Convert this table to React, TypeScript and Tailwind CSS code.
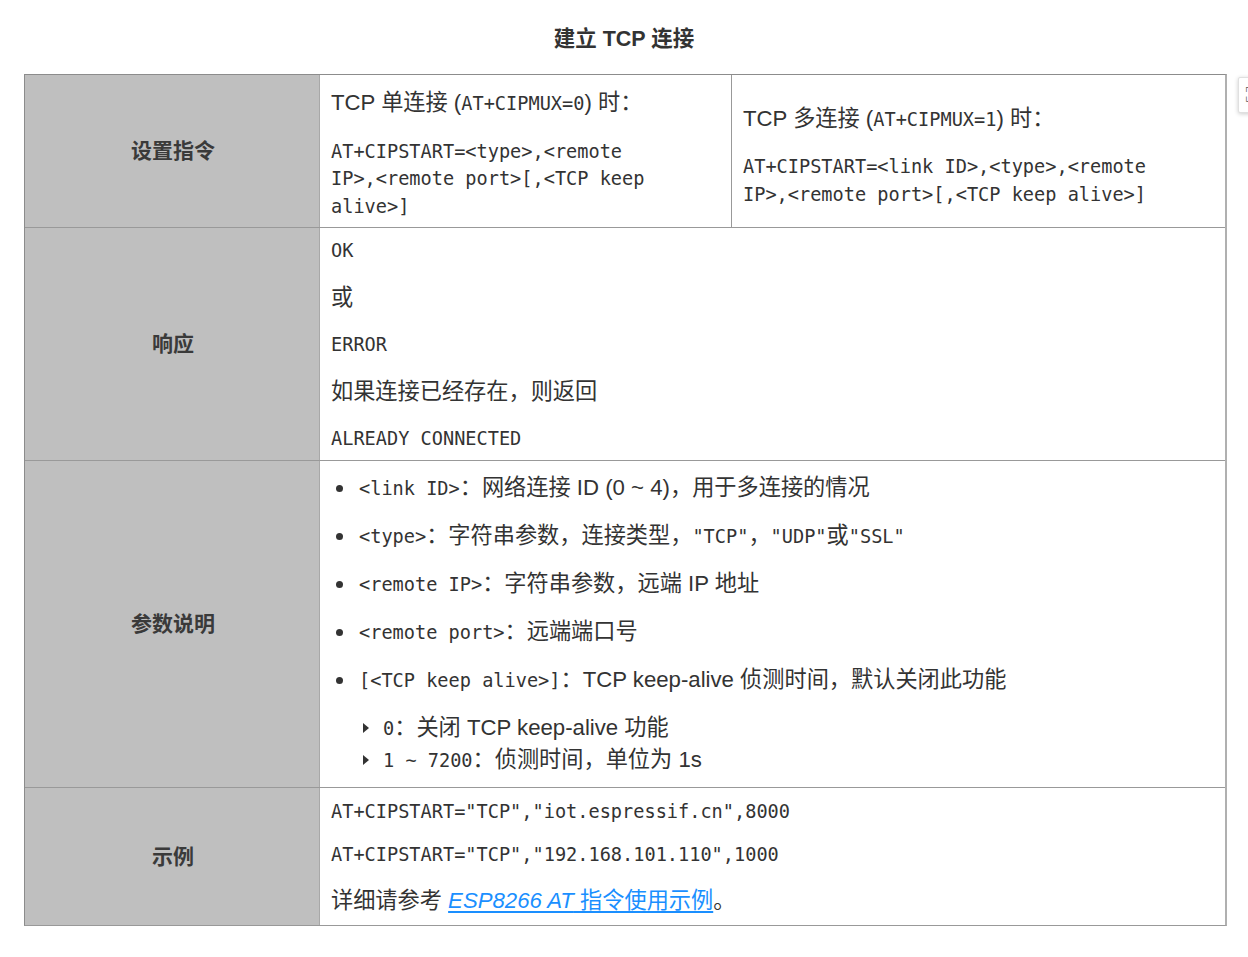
import React from "react";

const sans = "font-['Liberation_Sans','Noto_Sans_CJK_SC',sans-serif]";
const monoFont = "font-['DejaVu_Sans_Mono','Noto_Sans_CJK_SC',monospace] text-[18.6px]";

function Mono({ children }: { children: React.ReactNode }) {
  return <span className={monoFont}>{children}</span>;
}

function Line({ children, mono = false, className = "" }: { children: React.ReactNode; mono?: boolean; className?: string }) {
  return (
    <div className={`h-[27.5px] leading-[27.5px] whitespace-nowrap flex items-center ${mono ? monoFont : ""} ${className}`}>
      <span>{children}</span>
    </div>
  );
}

function Bullet({ children }: { children: React.ReactNode }) {
  return (
    <div className="flex items-center h-[27.5px]">
      <span className="w-[7px] h-[7px] rounded-full bg-[#333] ml-[5px] mr-[16px] shrink-0" />
      <div className="whitespace-nowrap">{children}</div>
    </div>
  );
}

function SubBullet({ children }: { children: React.ReactNode }) {
  return (
    <div className="flex items-center h-[27.5px] pl-[32px]">
      <span className="w-0 h-0 border-y-[5px] border-y-transparent border-l-[6px] border-l-[#333] mr-[14px] shrink-0" />
      <div className="whitespace-nowrap">{children}</div>
    </div>
  );
}

function Label({ children }: { children: React.ReactNode }) {
  return (
    <div className="w-[295px] shrink-0 bg-[#bfbfbf] border-r border-[#a8a8a8] flex items-center justify-center font-bold text-[21px] text-[#3a3a3a] pl-[2px]">
      {children}
    </div>
  );
}

export default function App() {
  return (
    <div className={`w-[1248px] h-[957px] bg-white relative overflow-hidden text-[#333] ${sans} text-[22.2px] leading-[27.5px]`}>
      <div className="h-[74px] flex items-center justify-center font-bold text-[21.5px] text-[#333] pt-[5px]">
        建立 TCP 连接
      </div>

      <div className="ml-[24px] w-[1203px] border-t border-t-[#8c8c8c] border-l border-l-[#8c8c8c] border-r-2 border-r-[#b0b0b0] border-b border-b-[#999]">
        {/* Row 1 */}
        <div className="flex border-b border-[#999]">
          <Label>设置指令</Label>
          <div className="w-[412px] shrink-0 border-r border-[#999] pl-[11px] pt-[14px] pb-[7px]">
            <Line>
              TCP 单连接 (<Mono>AT+CIPMUX=0</Mono>) 时：
            </Line>
            <div className="mt-[21px]">
              <Line mono>AT+CIPSTART=&lt;type&gt;,&lt;remote</Line>
              <Line mono>IP&gt;,&lt;remote port&gt;[,&lt;TCP keep</Line>
              <Line mono>alive&gt;]</Line>
            </div>
          </div>
          <div className="flex-1 pl-[11px] pt-[30px]">
            <Line>
              TCP 多连接 (<Mono>AT+CIPMUX=1</Mono>) 时：
            </Line>
            <div className="mt-[20.5px]">
              <Line mono>AT+CIPSTART=&lt;link ID&gt;,&lt;type&gt;,&lt;remote</Line>
              <Line mono>IP&gt;,&lt;remote port&gt;[,&lt;TCP keep alive&gt;]</Line>
            </div>
          </div>
        </div>

        {/* Row 2 */}
        <div className="flex border-b border-[#999]">
          <Label>响应</Label>
          <div className="flex-1 pl-[11px] pt-[9px] pb-[7px] flex flex-col gap-[19.5px]">
            <Line mono>OK</Line>
            <Line>或</Line>
            <Line mono>ERROR</Line>
            <Line>如果连接已经存在，则返回</Line>
            <Line mono>ALREADY CONNECTED</Line>
          </div>
        </div>

        {/* Row 3 */}
        <div className="flex border-b border-[#999]">
          <Label>参数说明</Label>
          <div className="flex-1 pl-[11px] pt-[14px] pb-[13px] flex flex-col">
            <div className="flex flex-col gap-[20.5px]">
              <Bullet><Mono>&lt;link ID&gt;</Mono>：网络连接 ID (0 ~ 4)，用于多连接的情况</Bullet>
              <Bullet><Mono>&lt;type&gt;</Mono>：字符串参数，连接类型，<Mono>"TCP"</Mono>，<Mono>"UDP"</Mono>或<Mono>"SSL"</Mono></Bullet>
              <Bullet><Mono>&lt;remote IP&gt;</Mono>：字符串参数，远端 IP 地址</Bullet>
              <Bullet><Mono>&lt;remote port&gt;</Mono>：远端端口号</Bullet>
              <Bullet><Mono>[&lt;TCP keep alive&gt;]</Mono>：TCP keep-alive 侦测时间，默认关闭此功能</Bullet>
            </div>
            <div className="flex flex-col gap-[4.5px] mt-[20.5px]">
              <SubBullet><Mono>0</Mono>：关闭 TCP keep-alive 功能</SubBullet>
              <SubBullet><Mono>1 ~ 7200</Mono>：侦测时间，单位为 1s</SubBullet>
            </div>
          </div>
        </div>

        {/* Row 4 */}
        <div className="flex">
          <Label>示例</Label>
          <div className="flex-1 pl-[11px] pt-[10px] pb-[10px] flex flex-col">
            <Line mono>AT+CIPSTART="TCP","iot.espressif.cn",8000</Line>
            <Line mono className="mt-[15.5px]">AT+CIPSTART="TCP","192.168.101.110",1000</Line>
            <Line className="mt-[18.5px]">
              详细请参考 <span className="underline text-[#1a8fff] underline-offset-[3px]"><span className="italic">ESP8266 AT</span> 指令使用示例</span>。
            </Line>
          </div>
        </div>
      </div>

      <div className="absolute left-[1238px] top-[77px] w-[30px] h-[36px] bg-white border border-[#e0e0e0] shadow-[0_1px_4px_rgba(0,0,0,0.2)] rounded-[2px] text-[8px] leading-[10px] text-[#555] pl-[5px] pt-[5px] font-['DejaVu_Sans',sans-serif]">
        <div>┌</div>
        <div className="mt-[4px]">└</div>
      </div>
    </div>
  );
}
